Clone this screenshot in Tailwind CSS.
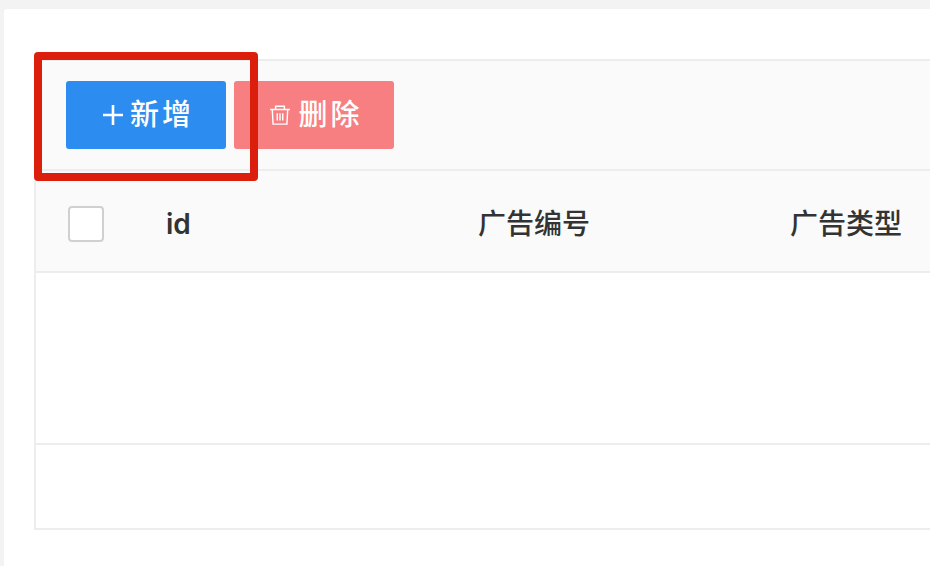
<!DOCTYPE html>
<html lang="zh-CN">
<head>
    <meta charset="UTF-8">
    <title>广告管理</title>
    <script src="https://cdn.jsdelivr.net/npm/@tailwindcss/browser@4"></script>
</head>
<body class="w-[930px] h-[566px] overflow-hidden bg-[#f3f3f3] font-['Inter','Noto_Sans_CJK_SC',sans-serif]">
    <main class="relative ml-[4px] mt-[9px] pt-[50px] pl-[30px] h-[557px] w-[926px] bg-white rounded-tl-[3px] overflow-hidden">
        <div class="w-[920px] border-2 border-r-0 border-[#ededed] h-[471px] flex flex-col">
            <!-- toolbar -->
            <div class="h-[110px] shrink-0 flex items-center gap-2 pl-[30px] bg-[#fafafa] border-b-2 border-[#ededed]">
                <button class="w-[160px] h-[68px] pl-[5px] rounded-[3px] bg-[#2d8cf0] text-white text-[29px] font-medium tracking-[3px] flex items-center justify-center gap-[7px]">
                    <svg class="w-[20px] h-[20px]" viewBox="0 0 20 20" fill="none" stroke="white" stroke-width="2.6"><path d="M10 0v20M0 10h20"/></svg>
                    <span>新增</span>
                </button>
                <button class="w-[160px] h-[68px] pl-[4px] rounded-[3px] bg-[#f77f81] text-white text-[29px] font-medium tracking-[3px] flex items-center justify-center gap-[7px]">
                    <svg class="w-[22px] h-[22px]" viewBox="0 0 20 20" fill="none" stroke="white" stroke-width="1.3"><path d="M1 5h18M6 4.500V2h8v2.500M3 5l.7 13.300h12.600L17 5M7.500 8.500v6.500M10 8.500v6.500M12.500 8.500v6.500"/></svg>
                    <span>删除</span>
                </button>
            </div>
            <!-- table header -->
            <div class="h-[102px] shrink-0 flex items-center pt-[6px] bg-[#fafafa] border-b-2 border-[#ededed] text-[#333] text-[28px] font-medium">
                <div class="w-[130px] shrink-0 pl-[32px]">
                    <div class="w-[36px] h-[36px] bg-white border-2 border-[#d0d0d0] rounded-[4px]"></div>
                </div>
                <div class="w-[312px] shrink-0 font-semibold">id</div>
                <div class="w-[312px] shrink-0">广告编号</div>
                <div class="w-[312px] shrink-0">广告类型</div>
            </div>
            <!-- rows -->
            <div class="h-[172px] shrink-0 border-b-2 border-[#ededed]"></div>
            <div class="flex-1"></div>
        </div>
        <!-- red annotation -->
        <div class="absolute left-[30px] top-[43px] w-[224px] h-[129px] border-[8px] border-[#db1f0c] rounded-[4px]"></div>
    </main>
</body>
</html>
